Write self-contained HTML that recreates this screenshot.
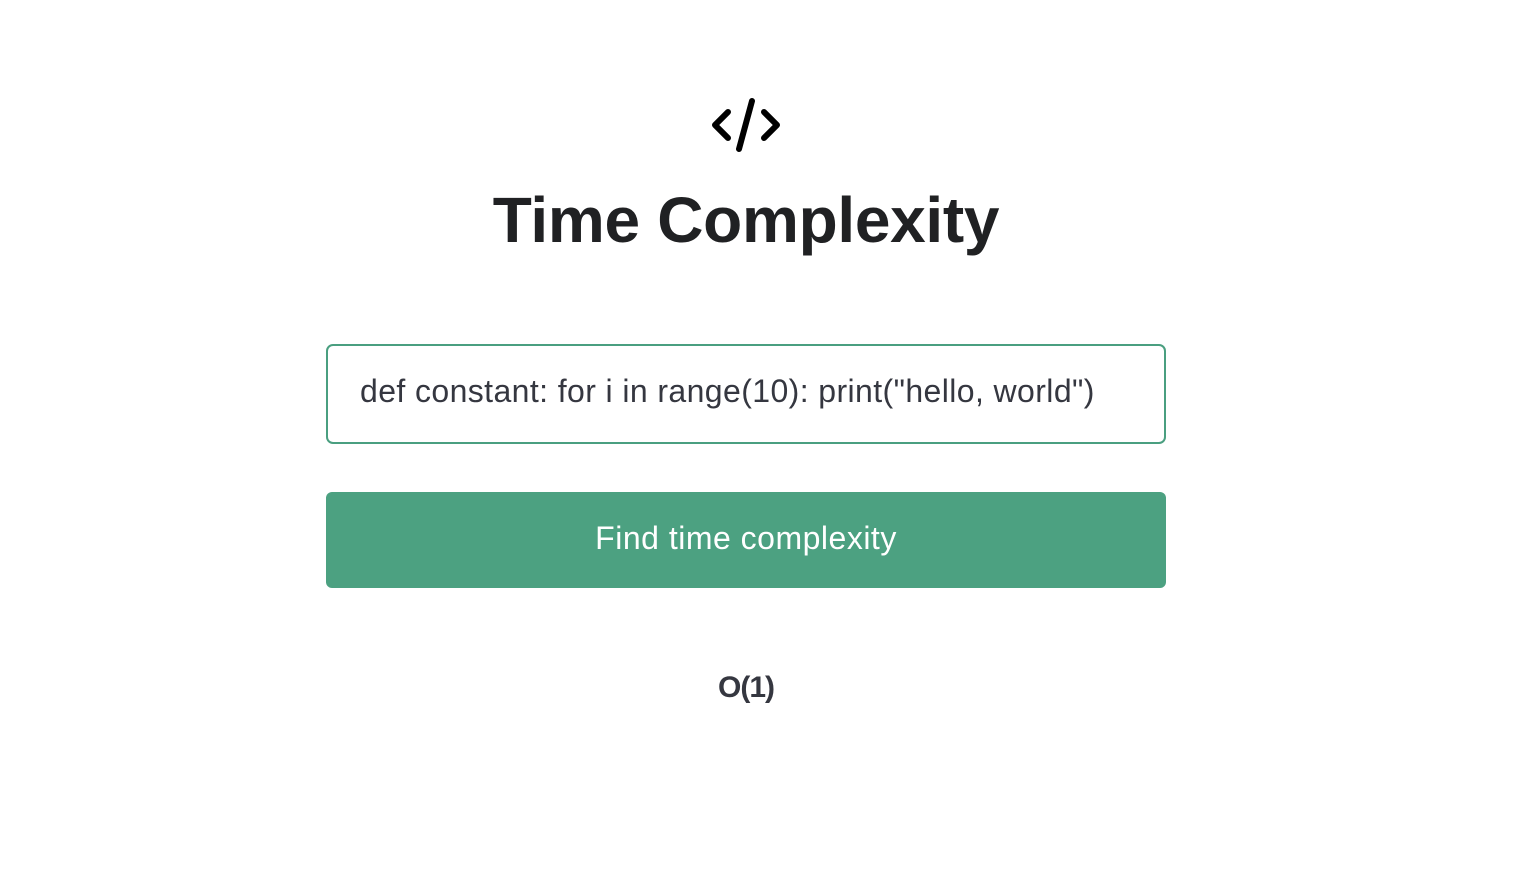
<!DOCTYPE html>
<html><head><style>
body{margin:0;width:1518px;height:882px;background:#fff;font-family:"Liberation Sans",sans-serif;position:relative;overflow:hidden}
.t{position:absolute;left:0;width:1492px;text-align:center}
h1{position:absolute;left:0;width:1492px;text-align:center;top:180px;margin:0;font-size:64px;font-weight:bold;color:#202123;letter-spacing:-0.3px;line-height:80px}
.inp{position:absolute;left:326px;top:344px;width:836px;height:96px;border:2px solid #4a9f80;border-radius:7px;}
.inp span{position:absolute;left:32px;top:27px;font-size:32px;color:#353740;white-space:nowrap;letter-spacing:0.4px}
.btn{position:absolute;left:326px;top:492px;width:840px;height:96px;background:#4ca181;border-radius:6px;color:#fff;font-size:32px;letter-spacing:0.5px;text-align:center;line-height:92px}
.res{top:670px;font-size:30px;font-weight:bold;color:#353740;line-height:36px;letter-spacing:-1px}
</style></head><body>
<svg style="position:absolute;left:700px;top:90px" width="100" height="70" viewBox="0 0 100 70">
<g fill="none" stroke="#000" stroke-width="6" stroke-linecap="round" stroke-linejoin="round">
<polyline points="28,22 15,35 28,48"/>
<polyline points="64,22 77,35 64,48"/>
<line x1="52" y1="11" x2="39" y2="59"/>
</g></svg>
<h1>Time Complexity</h1>
<div class="inp"><span>def constant: for i in range(10): print("hello, world")</span></div>
<div class="btn">Find time complexity</div>
<div class="t res">O(1)</div>
</body></html>
